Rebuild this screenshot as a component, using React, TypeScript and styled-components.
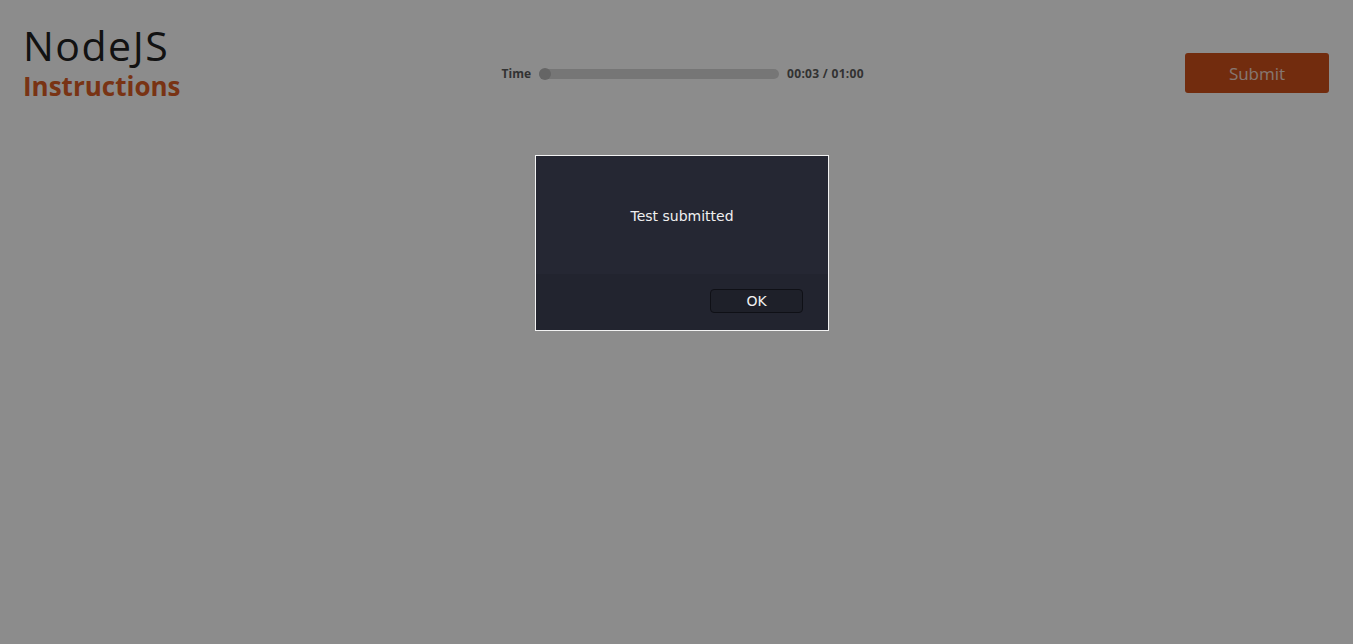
import React from "react";
import styled, { createGlobalStyle } from "styled-components";

const Global = createGlobalStyle`
  html, body { margin: 0; padding: 0; background: #ffffff; }
  body { font-family: "Open Sans", "DejaVu Sans", sans-serif; }
  * { box-sizing: border-box; }
`;

const Page = styled.div`
  width: 1353px;
  height: 644px;
  position: relative;
  overflow: hidden;
  background: #ffffff;
`;

const Header = styled.header`
  display: flex;
  align-items: flex-start;
  justify-content: space-between;
  padding: 22px 24px 0 23px;
`;

const TitleBlock = styled.div`
  display: flex;
  flex-direction: column;
`;

const Title = styled.h1`
  margin: 0;
  font-family: "Open Sans", sans-serif;
  font-weight: 400;
  font-size: 41px;
  line-height: 46px;
  letter-spacing: 1.5px;
  color: #222222;
`;

const Subtitle = styled.h2`
  margin: 3px 0 0 0;
  font-family: "Open Sans", sans-serif;
  font-weight: 700;
  font-size: 26px;
  line-height: 30px;
  color: #dc5e25;
`;

const TimeRow = styled.div`
  display: flex;
  align-items: center;
  gap: 8px;
  margin-top: 43px;
  font-family: "Open Sans", sans-serif;
  font-weight: 700;
  font-size: 12px;
  line-height: 17px;
  color: #5c5c5c;
`;

const TimeText = styled.span`
  letter-spacing: 0.3px;
`;

const Track = styled.div`
  position: relative;
  width: 240px;
  height: 10px;
  border-radius: 5px;
  background: #d8d8d8;
`;

const Thumb = styled.div`
  position: absolute;
  top: -1px;
  width: 12px;
  height: 12px;
  border-radius: 50%;
  background: #b8b8b8;
`;

const SubmitButton = styled.button`
  width: 144px;
  height: 40px;
  margin-top: 31px;
  border: none;
  border-radius: 3px;
  background: #d0511b;
  color: #ffffff;
  font-family: "Open Sans", sans-serif;
  font-size: 17px;
  padding: 0;
`;

const SubmitLabel = styled.span`
  opacity: 0.78;
`;

const Overlay = styled.div`
  position: absolute;
  inset: 0;
  background: rgba(0, 0, 0, 0.45);
`;

const Dialog = styled.div`
  position: absolute;
  left: 535px;
  top: 155px;
  width: 294px;
  height: 176px;
  border: 1px solid #f2f2f2;
  background: #252733;
  display: flex;
  flex-direction: column;
  font-family: "DejaVu Sans", sans-serif;
`;

const DialogBody = styled.div`
  height: 118px;
  display: flex;
  justify-content: center;
  padding-top: 52px;
  color: #f0f0f0;
  font-size: 14px;
`;

const DialogFooter = styled.div`
  flex: 1;
  background: #22242f;
  display: flex;
  justify-content: flex-end;
  align-items: flex-start;
  padding: 15px 25px 0 0;
`;

const OkButton = styled.button`
  width: 93px;
  height: 24px;
  border-radius: 4px;
  border: 1px solid #0f1016;
  background: #1e2029;
  color: #f0f0f0;
  font-family: "DejaVu Sans", sans-serif;
  font-size: 14px;
  padding: 0;
  line-height: 22px;
`;

export default function App() {
  const progress = 0;
  return (
    <Page>
      <Global />
      <Header>
        <TitleBlock>
          <Title>NodeJS</Title>
          <Subtitle>Instructions</Subtitle>
        </TitleBlock>
        <TimeRow>
          <span>Time</span>
          <Track>
            <Thumb style={{ left: `${progress}%` }} />
          </Track>
          <TimeText>00:03 / 01:00</TimeText>
        </TimeRow>
        <SubmitButton>
          <SubmitLabel>Submit</SubmitLabel>
        </SubmitButton>
      </Header>
      <Overlay />
      <Dialog>
        <DialogBody>Test submitted</DialogBody>
        <DialogFooter>
          <OkButton>OK</OkButton>
        </DialogFooter>
      </Dialog>
    </Page>
  );
}
